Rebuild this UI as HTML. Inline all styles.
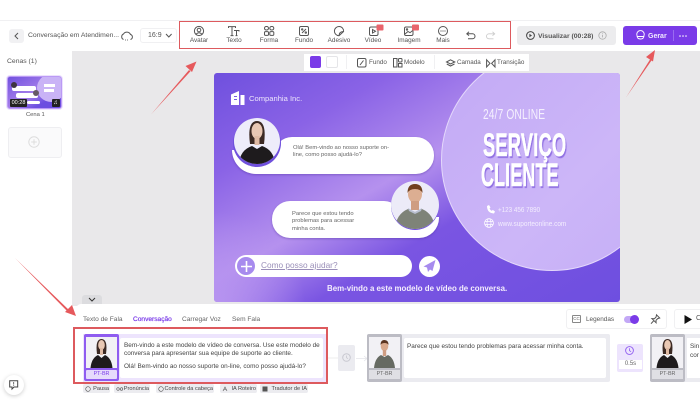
<!DOCTYPE html>
<html><head><meta charset="utf-8">
<style>
html,body{margin:0;padding:0;background:#fff}
#r{position:relative;width:700px;height:400px;overflow:hidden;background:#fff;font-family:"Liberation Sans",sans-serif;color:#444}
.a{position:absolute}
.t{position:absolute;white-space:nowrap}
.lab{position:absolute;top:36.5px;font-size:6.4px;color:#555;text-align:center;width:50px;white-space:nowrap}
svg{position:absolute;overflow:visible}
.ic{fill:none;stroke:#555;stroke-width:1}
.tag{position:absolute;top:384px;height:9px;background:#ececf0;border-radius:2px}
.tag span{position:absolute;right:1px;top:2px;font-size:5.6px;line-height:7px;color:#444;white-space:nowrap}
.tag svg{left:2px;top:1.5px}
.red{position:absolute;background:#dd5a5e}
</style></head><body><div id="r">
<!-- top bar -->
<div class="a" style="left:0;top:20px;width:700px;height:1px;background:#f0f0f2"></div>
<div class="a" style="left:9px;top:29px;width:15px;height:14px;background:#f1f1f3;border-radius:3px"></div>
<svg style="left:0;top:0" width="30" height="50"><path d="M18 33l-3 3 3 3" class="ic"/></svg>
<div class="t" style="left:28px;top:32px;font-size:6.8px;color:#555">Conversação em Atendimen...</div>
<svg style="left:120px;top:30px" width="14" height="12"><path d="M3.5 9.500a3 3 0 0 1 0-5.500 4 4 0 0 1 7 .5 2.600 2.600 0 0 1 0 5" class="ic" stroke-width=".8"/><path d="M5 10h.8M7 10h.8" class="ic" stroke-width=".8"/></svg>
<div class="a" style="left:140px;top:28px;width:37px;height:15px;border:1px solid #f0f0f2;border-radius:3px;box-sizing:border-box"></div>
<div class="t" style="left:148px;top:31.5px;font-size:7px;color:#555">16:9</div>
<svg style="left:165px;top:33px" width="8" height="6"><path d="M1 1l2.800 3 2.800-3" class="ic" stroke-width=".7"/></svg>
<div class="a" style="left:179px;top:21px;width:332px;height:28px;border:1.5px solid #dd5a5e;box-sizing:border-box"></div>
<!-- toolbar icons -->
<svg style="left:194px;top:26px" width="11" height="11"><circle cx="5" cy="5" r="4.600" class="ic"/><circle cx="5" cy="4" r="1.800" class="ic"/><path d="M2 8.200q3-3 6 0" class="ic"/></svg>
<div class="lab" style="left:174px">Avatar</div>
<svg style="left:228px;top:26px" width="12" height="11"><path d="M.5 2V.6h7V2M4 .6v9M2.500 9.600h3M6 4.500h5v1M8.500 4.500v5M7.500 9.600h2" class="ic"/></svg>
<div class="lab" style="left:209px">Texto</div>
<svg style="left:264px;top:26px" width="11" height="11"><rect x=".5" y=".5" width="4" height="3.500" rx="1.700" class="ic"/><rect x="5.800" y=".5" width="4" height="3.500" rx="1.700" class="ic"/><rect x=".5" y="5.600" width="4" height="3.800" rx="1" class="ic"/><rect x="5.800" y="5.600" width="4" height="3.800" rx="1" class="ic"/></svg>
<div class="lab" style="left:244px">Forma</div>
<svg style="left:299px;top:26px" width="11" height="11"><rect x=".5" y=".5" width="9" height="9" rx="1.500" class="ic"/><path d="M3 7l4-4" class="ic"/><circle cx="3.200" cy="3.400" r=".7" class="ic"/><circle cx="6.800" cy="6.600" r=".7" class="ic"/></svg>
<div class="lab" style="left:279px">Fundo</div>
<svg style="left:334px;top:26px" width="11" height="11"><path d="M9.600 5.500A4.600 4.600 0 1 0 5 9.700L9.600 5.500zM5 9.700q0-4 4.600-4.200" class="ic"/></svg>
<div class="lab" style="left:314px">Adesivo</div>
<svg style="left:369px;top:24px" width="16" height="13"><rect x=".5" y="3" width="8.500" height="8.500" rx="1.500" class="ic"/><path d="M3.500 5.500v3.500l3-1.700z" class="ic" stroke-width=".8"/><rect x="7.500" y=".5" width="7" height="6" rx="1" fill="#e8646c"/></svg>
<div class="lab" style="left:348px">Vídeo</div>
<svg style="left:404px;top:24px" width="16" height="13"><rect x=".5" y="3" width="8.500" height="8.500" rx="1.500" class="ic"/><circle cx="3" cy="5.500" r=".7" class="ic"/><path d="M1 10l3-2.500 2 1.200 3-2.500" class="ic" stroke-width=".8"/><rect x="8" y=".5" width="7" height="6" rx="1" fill="#e8646c"/></svg>
<div class="lab" style="left:384px">Imagem</div>
<svg style="left:438px;top:26px" width="11" height="11"><circle cx="5" cy="5" r="4.500" class="ic"/><circle cx="3" cy="5" r=".6" fill="#555"/><circle cx="5" cy="5" r=".6" fill="#555"/><circle cx="7" cy="5" r=".6" fill="#555"/></svg>
<div class="lab" style="left:418px">Mais</div>
<svg style="left:466px;top:31px" width="11" height="9"><path d="M3 .8L.8 2.800 3 4.600M1 2.800h5.500a2.500 2.500 0 0 1 0 5H2" class="ic"/></svg>
<svg style="left:485px;top:31px" width="11" height="9"><path d="M7.500.8l2.200 2L7.500 4.600M9.500 2.800H4a2.500 2.500 0 0 0 0 5h4.500" fill="none" stroke="#ccc" stroke-width=".9"/></svg>
<!-- visualizar -->
<div class="a" style="left:517px;top:26px;width:99px;height:19px;background:#ececee;border-radius:3px"></div>
<svg style="left:526px;top:31px" width="10" height="10"><circle cx="4.500" cy="4.500" r="3.900" class="ic" style="stroke:#444"/><path d="M3.400 2.800v3.400l2.600-1.700z" fill="#444"/></svg>
<div class="t" style="left:538px;top:33px;font-size:6.8px;font-weight:bold;color:#555">Visualizar (00:28)</div>
<svg style="left:598px;top:31px" width="10" height="10"><circle cx="4.500" cy="4.500" r="3.700" fill="none" stroke="#aaa" stroke-width=".8"/><path d="M4.500 4v2.400M4.500 2.400v.8" stroke="#aaa" stroke-width=".8"/></svg>
<!-- gerar -->
<div class="a" style="left:623px;top:26px;width:74px;height:19px;background:#7a3be8;border-radius:3px"></div>
<svg style="left:636px;top:31px" width="10" height="10"><path d="M1 4.500a3.700 3.700 0 1 1 7 0q0 3.500-3.500 3.500T1 4.500zM1.500 5.500h6" fill="none" stroke="#fff" stroke-width=".9"/></svg>
<div class="t" style="left:648px;top:33px;font-size:7px;font-weight:bold;color:#f2eaff">Gerar</div>
<div class="a" style="left:673px;top:30px;width:1px;height:11px;background:#9a6cf0"></div>
<svg style="left:679px;top:35px" width="10" height="2"><circle cx="1" cy="1" r=".8" fill="#fff"/><circle cx="4" cy="1" r=".8" fill="#fff"/><circle cx="7" cy="1" r=".8" fill="#fff"/></svg>

<!-- sidebar -->
<div class="t" style="left:7px;top:57.5px;font-size:6.8px;color:#555">Cenas (1)</div>
<div class="a" style="left:7px;top:76px;width:55px;height:33px;border:1.5px solid #bb9af5;border-radius:3px;box-shadow:0 0 0 1px #ece2fd;box-sizing:border-box;overflow:hidden;background:linear-gradient(150deg,#7152de,#a57eea 50%,#6c4ee0 75%)">
 <div class="a" style="left:29px;top:-3px;width:28px;height:28px;border-radius:50%;background:#c9b3f6"></div>
 <div class="a" style="left:36px;top:7px;width:11px;height:3px;background:#fff"></div>
 <div class="a" style="left:36px;top:12px;width:10px;height:3px;background:#fff"></div>
 <div class="a" style="left:4px;top:9px;width:24px;height:4.5px;background:#fff;border-radius:2px"></div>
 <div class="a" style="left:8px;top:16px;width:22px;height:4.5px;background:#fff;border-radius:2px"></div>
 <div class="a" style="left:2.5px;top:5px;width:6px;height:6px;border-radius:50%;background:#3e3440"></div>
 <div class="a" style="left:25px;top:13px;width:6px;height:6px;border-radius:50%;background:#665a66"></div>
 <div class="a" style="left:2px;top:21.5px;width:17px;height:8px;background:#222;color:#fff;font-size:5.5px;line-height:8px;text-align:center;border-radius:1px">00:28</div>
 <div class="a" style="left:19px;top:23.5px;width:13px;height:3.5px;background:#fff;border-radius:2px"></div>
 <div class="a" style="left:43.5px;top:21.5px;width:8px;height:8px;background:#222;color:#fff;font-size:6px;line-height:8px;text-align:center;border-radius:1px">♫</div>
</div>
<div class="t" style="left:26px;top:111.5px;font-size:5.8px;color:#555">Cena 1</div>
<div class="a" style="left:8px;top:127px;width:54px;height:31px;border:1px solid #eeeef1;border-radius:3px;box-sizing:border-box;background:#fafafb"></div>
<svg style="left:28px;top:136px" width="13" height="13"><circle cx="6" cy="6" r="5.200" fill="none" stroke="#ddd"/><path d="M6 3.200v5.600M3.200 6h5.600" stroke="#ddd"/></svg>

<!-- canvas -->
<div class="a" style="left:72px;top:51px;width:628px;height:255px;background:#e9e8ea"></div>
<div class="a" style="left:304px;top:54px;width:225px;height:17px;background:#fff"></div>
<div class="a" style="left:310px;top:56px;width:11px;height:12px;background:#7a3be8;border-radius:2px"></div>
<div class="a" style="left:326px;top:56px;width:12px;height:12px;background:#fff;border:1px solid #e5e5e8;border-radius:2px;box-sizing:border-box"></div>
<div class="a" style="left:346px;top:55px;width:1px;height:14px;background:#f0f0f2"></div>
<svg style="left:357px;top:57.5px" width="10" height="10"><rect x=".5" y=".5" width="8.500" height="8.500" rx="1.500" class="ic" stroke-width=".8"/><path d="M3 7l3.500-4.500" class="ic" stroke-width=".8"/></svg>
<div class="t" style="left:369px;top:59px;font-size:6.3px;color:#555">Fundo</div>
<svg style="left:393px;top:57.5px" width="10" height="10"><rect x=".5" y=".5" width="3.500" height="8.500" class="ic" stroke-width=".8"/><rect x="5.500" y=".5" width="3.500" height="3.500" rx="1" class="ic" stroke-width=".8"/><rect x="5.500" y="5.500" width="3.500" height="3.500" class="ic" stroke-width=".8"/></svg>
<div class="t" style="left:404px;top:59px;font-size:6.3px;color:#555">Modelo</div>
<div class="a" style="left:434px;top:55px;width:1px;height:14px;background:#f0f0f2"></div>
<svg style="left:446px;top:58.5px" width="10" height="9"><path d="M4.500.8L8.800 3 4.500 5 .5 3zM.8 5l3.700 2L8.500 5" class="ic" stroke-width=".8"/></svg>
<div class="t" style="left:457px;top:59px;font-size:6.3px;color:#555">Camada</div>
<svg style="left:486px;top:58.5px" width="10" height="9"><path d="M.6.8l3.400 3.600L.6 8zM9 .8L5.600 4.400 9 8z" class="ic" stroke-width=".8"/></svg>
<div class="t" style="left:497px;top:59px;font-size:6.3px;color:#555">Transição</div>

<!-- stage -->
<div class="a" style="left:214px;top:73px;width:406px;height:229px;border-radius:3px;overflow:hidden;background:linear-gradient(150deg,#6f50de 0%,#8a63e6 22%,#b591ee 45%,#7a55e2 62%,#6e4fe0 100%)">
 <div class="a" style="left:0;top:0;width:230px;height:229px;background:radial-gradient(circle at 0% 100%,#b794f0 0,rgba(183,148,240,0) 28%)"></div>
 <div class="a" style="left:227px;top:-24px;width:222px;height:222px;border-radius:50%;background:linear-gradient(135deg,#c2a9f5,#ccb6f8 60%,#c5aef6);border:1px solid #e4d8fb;box-sizing:border-box"></div>
 <!-- logo -->
 <svg style="left:17px;top:18px" width="14" height="15"><path d="M0 3.500L8 0v14H0zM9.500 4H13.500v10H9.500z" fill="#fff"/><path d="M3 5.500h3M3 8.500h3" stroke="#7a5ae2" stroke-width="1"/></svg>
 <div class="t" style="left:35px;top:21px;font-size:7.6px;color:#ece4fc">Companhia Inc.</div>
 <!-- bubble 1 -->
 <div class="a" style="left:0;top:0;width:406px;height:229px;filter:drop-shadow(0 1px 1px rgba(70,40,150,.4))">
  <div class="a" style="left:60px;top:64px;width:160px;height:37px;background:#fff;border-radius:18px"></div>
  <div class="a" style="left:18px;top:77px;width:60px;height:24px;background:#fff;border-radius:0 0 0 24px"></div>
 </div>
 <div class="a" style="left:19px;top:46px;width:48px;height:48px;border-radius:50%;background:#6f50dc"></div>
 <div class="a" style="left:20px;top:45px;width:46px;height:46px;border-radius:50%;overflow:hidden;background:#eeedfa">
  <svg style="left:0;top:0" width="46" height="46"><path d="M16 26q-3-23 7-23t7 23z" fill="#3c2a24"/><ellipse cx="23" cy="13" rx="5.500" ry="8" fill="#e9c8b4"/><path d="M20.500 18h5v9h-5z" fill="#e0bba5"/><path d="M5 46q1-14 13-18l5 3 5-3q12 4 13 18z" fill="#1e1b1d"/></svg>
 </div>
 <div class="t" style="left:79px;top:72px;font-size:5.8px;line-height:7.2px;color:#666">Olá! Bem-vindo ao nosso suporte on-<br>line, como posso ajudá-lo?</div>
 <!-- bubble 2 -->
 <div class="a" style="left:0;top:0;width:406px;height:229px;filter:drop-shadow(0 1px 1px rgba(70,40,150,.4))">
  <div class="a" style="left:58px;top:128px;width:130px;height:37px;background:#fff;border-radius:18px"></div>
  <div class="a" style="left:165px;top:144px;width:60px;height:21px;background:#fff;border-radius:0 0 20px 0"></div>
 </div>
 <div class="a" style="left:177px;top:109px;width:48px;height:48px;border-radius:50%;background:#6f50dc"></div>
 <div class="a" style="left:177px;top:108px;width:48px;height:48px;border-radius:50%;overflow:hidden;background:#ecebf8">
  <svg style="left:0;top:0" width="48" height="48"><ellipse cx="24" cy="13" rx="7" ry="9" fill="#dcae92"/><path d="M16.500 12q0-9 7.500-9t7.500 9q-2-4-7.500-4t-7.500 4z" fill="#70401f"/><path d="M20 20h8v9h-8z" fill="#cf9d82"/><path d="M4 48q1-15 13-20l7 3 7-3q12 5 13 20z" fill="#7e8378"/><path d="M17 27l7 4 7-4-1 3-6 3-6-3z" fill="#b9c0d0"/></svg>
 </div>
 <div class="t" style="left:78px;top:137.5px;font-size:5.8px;line-height:7.6px;color:#666">Parece que estou tendo<br>problemas para acessar<br>minha conta.</div>
 <!-- input -->
 <div class="a" style="left:21px;top:182px;width:177px;height:22px;background:#fff;border-radius:11px"></div>
 <div class="a" style="left:23px;top:184px;width:18px;height:18px;border-radius:50%;background:#a78bee"></div>
 <svg style="left:25.5px;top:186.5px" width="13" height="13"><path d="M6.500 1v11M1 6.500h11" stroke="#fff" stroke-width="1.600"/></svg>
 <div class="t" style="left:47px;top:187px;font-size:8.3px;color:#9a8fb8;text-decoration:underline">Como posso ajudar?</div>
 <div class="a" style="left:205px;top:183px;width:21px;height:21px;border-radius:50%;background:#fff"></div>
 <svg style="left:207px;top:186px" width="17" height="15"><path d="M14.500 1L2.500 7.500l3.500 1 1 4.500 2-2.500 2.500 1.500z" fill="#a78bee"/></svg>
 <div class="t" style="left:113px;top:210.5px;font-size:7.9px;font-weight:bold;color:#f4eefd">Bem-vindo a este modelo de vídeo de conversa.</div>
 <!-- right text -->
 <div class="t" style="left:269px;top:33px;font-size:15px;color:#f5f0fe;transform:scaleX(.68);transform-origin:0 0;letter-spacing:.2px">24/7 ONLINE</div>
 <div class="t" style="left:269px;top:54px;font-size:32px;font-weight:bold;color:#fff;transform:scaleX(.57);transform-origin:0 0;text-shadow:2px 2px 1px #8f6fe2;-webkit-text-stroke:.6px #fff;letter-spacing:.4px">SERVIÇO</div>
 <div class="t" style="left:267px;top:84px;font-size:32px;font-weight:bold;color:#fff;transform:scaleX(.556);transform-origin:0 0;text-shadow:2px 2px 1px #8f6fe2;-webkit-text-stroke:.6px #fff;letter-spacing:.4px">CLIENTE</div>
 <svg style="left:272px;top:132px" width="9" height="9"><path d="M1 1l2-1 1.500 2.500-1 1q.8 1.800 2.300 2.400l1-1L9 6.500 8 8.500Q1 8 1 1z" fill="#fff"/></svg>
 <div class="t" style="left:284px;top:132px;font-size:7.4px;color:#f3edfe;transform:scaleX(.85);transform-origin:0 0">+123 456 7890</div>
 <svg style="left:270px;top:145px" width="11" height="11"><circle cx="5" cy="5" r="4.400" fill="none" stroke="#fff" stroke-width=".8"/><ellipse cx="5" cy="5" rx="2" ry="4.400" fill="none" stroke="#fff" stroke-width=".7"/><path d="M.6 3.500h8.800M.6 6.500h8.800" stroke="#fff" stroke-width=".7"/></svg>
 <div class="t" style="left:284px;top:146px;font-size:7.2px;color:#f3edfe;transform:scaleX(.9);transform-origin:0 0">www.suporteonline.com</div>
</div>

<!-- collapse -->
<div class="a" style="left:82px;top:295px;width:20px;height:9px;background:#dcdcdf;border-radius:3px 3px 0 0"></div>
<svg style="left:88px;top:297px" width="9" height="6"><path d="M1 1l3 3 3-3" class="ic" style="stroke:#333"/></svg>

<!-- bottom panel -->
<div class="a" style="left:76px;top:304px;width:624px;height:96px;background:#fff;border-radius:5px 0 0 0"></div>
<div class="t" style="left:83px;top:315.5px;font-size:6.6px;color:#666">Texto de Fala</div>
<div class="t" style="left:133px;top:315.5px;font-size:6.6px;color:#7a3be8;-webkit-text-stroke:.2px #7a3be8">Conversação</div>
<div class="t" style="left:182px;top:315.5px;font-size:6.6px;color:#666">Carregar Voz</div>
<div class="t" style="left:232px;top:315.5px;font-size:6.6px;color:#666">Sem Fala</div>
<div class="a" style="left:566px;top:309px;width:101px;height:20px;border:1px solid #f0f0f2;border-radius:3px;box-sizing:border-box"></div>
<div class="a" style="left:572px;top:315px;width:9px;height:8px;border:1px solid #888;border-radius:1px;box-sizing:border-box;font-size:4.5px;line-height:6px;text-align:center;color:#666">CC</div>
<div class="t" style="left:586px;top:315.5px;font-size:6.4px;color:#555">Legendas</div>
<div class="a" style="left:624px;top:316px;width:14px;height:7px;background:#c3a8f6;border-radius:4px"></div>
<div class="a" style="left:630px;top:315px;width:9px;height:9px;background:#7a3be8;border-radius:50%"></div>
<svg style="left:650px;top:314px" width="11" height="11"><path d="M6.500.8l3.200 3.200-2 .6-1.700 1.700.1 2.500-4.200-4.200 2.500.1 1.700-1.700zM3.500 7L1 9.700" class="ic" stroke-width=".8"/></svg>
<div class="a" style="left:674px;top:309px;width:30px;height:20px;border:1px solid #f0f0f2;border-radius:3px;box-sizing:border-box"></div>
<svg style="left:684px;top:315px" width="9" height="9"><path d="M.5 0v9L8 4.500z" fill="#111"/></svg>
<div class="t" style="left:696px;top:315px;font-size:7px;color:#555">C</div>

<!-- card 1 -->
<div class="a" style="left:83px;top:334px;width:243px;height:48px;background:#ede4fd"></div>
<div class="a" style="left:120px;top:338px;width:203px;height:40px;background:#fff;border-radius:2px"></div>
<div class="a" style="left:84px;top:334px;width:35px;height:47px;background:#8f5cf0;border-radius:2px"></div>
<div class="a" style="left:86px;top:337px;width:31px;height:31px;background:#f2f1f5;overflow:hidden">
 <svg style="left:0;top:0" width="31" height="31"><path d="M11 17q-2-15 4.500-15T20 17z" fill="#3c2a24"/><ellipse cx="15.500" cy="8" rx="3.300" ry="5" fill="#e9c8b4"/><path d="M14 11h3v7h-3z" fill="#e0bba5"/><path d="M4.500 31q1-10 7.500-13l3.500 3 3.500-3q6.500 3 7.500 13z" fill="#1e1b1d"/></svg>
</div>
<div class="a" style="left:86px;top:370px;width:31px;height:9px;background:#e6dafc;border-radius:1px;font-size:5.4px;line-height:9px;text-align:center;color:#7a3be8">PT-BR</div>
<div class="t" style="left:124px;top:341.5px;font-size:6.4px;line-height:8.5px;color:#444">Bem-vindo a este modelo de vídeo de conversa. Use este modelo de<br>conversa para apresentar sua equipe de suporte ao cliente.</div>
<div class="t" style="left:124px;top:363px;font-size:6.4px;color:#444">Olá! Bem-vindo ao nosso suporte on-line, como posso ajudá-lo?</div>
<!-- red frame around card 1 -->
<div class="red" style="left:73px;top:327px;width:255px;height:2px"></div>
<div class="red" style="left:73px;top:382px;width:255px;height:2px"></div>
<div class="red" style="left:73px;top:327px;width:2px;height:57px"></div>
<div class="red" style="left:326px;top:327px;width:2px;height:57px"></div>
<!-- connector -->
<div class="a" style="left:338px;top:345px;width:17px;height:26px;background:#ebebf0;border-radius:2px"></div>
<svg style="left:342px;top:353px" width="10" height="10"><circle cx="4.500" cy="4.500" r="3.800" fill="none" stroke="#c8c8d0"/><path d="M4.500 2.500v2.200l1.500 1" fill="none" stroke="#c8c8d0" stroke-width=".8"/></svg>
<svg style="left:328px;top:355px" width="40" height="8"><path d="M0 3h10" stroke="#eee"/><path d="M28 3.500h11M36 1l3 2.500L36 6" fill="none" stroke="#e5e5ea" stroke-width=".8"/></svg>
<!-- card 2 -->
<div class="a" style="left:367px;top:334px;width:243px;height:48px;background:#ebebf0;border-radius:2px"></div>
<div class="a" style="left:367px;top:334px;width:35px;height:48px;background:#bcbcc4;border-radius:2px"></div>
<div class="a" style="left:369px;top:337px;width:31px;height:31px;background:#f2f1f5;overflow:hidden">
 <svg style="left:0;top:0" width="31" height="31"><ellipse cx="15.500" cy="9" rx="3.800" ry="5.200" fill="#d9a98c"/><path d="M11.500 8q0-5 4-5t4 5q-1-2-4-2t-4 2z" fill="#5b3520"/><path d="M13.800 13h3.400v6h-3.400z" fill="#cf9d82"/><path d="M5 31q1-10 7-13l3.500 2 3.500-2q6 3 7 13z" fill="#666a62"/></svg>
</div>
<div class="a" style="left:369px;top:370px;width:31px;height:9px;background:#dfdfe4;font-size:5.4px;line-height:9px;text-align:center;color:#666">PT-BR</div>
<div class="a" style="left:404px;top:338px;width:202px;height:40px;background:#fff;border-radius:2px"></div>
<div class="t" style="left:407px;top:342.5px;font-size:6.4px;color:#444">Parece que estou tendo problemas para acessar minha conta.</div>
<!-- 0.5s -->
<div class="a" style="left:617px;top:344px;width:26px;height:28px;background:#ede4fd;border-radius:2px"></div>
<svg style="left:625px;top:346px" width="10" height="10"><circle cx="4.500" cy="4.500" r="3.900" fill="none" stroke="#8f5cf0" stroke-width=".9"/><path d="M4.500 2.300v2.400l1.600 1" fill="none" stroke="#8f5cf0" stroke-width=".8"/></svg>
<div class="a" style="left:619px;top:360px;width:23px;height:9px;background:#fff;font-size:6px;line-height:9px;text-align:center;color:#666">0.5s</div>
<!-- card 3 -->
<div class="a" style="left:650px;top:334px;width:50px;height:48px;background:#ebebf0;border-radius:2px 0 0 2px"></div>
<div class="a" style="left:650px;top:334px;width:35px;height:48px;background:#bcbcc4;border-radius:2px"></div>
<div class="a" style="left:652px;top:337px;width:31px;height:31px;background:#f2f1f5;overflow:hidden">
 <svg style="left:0;top:0" width="31" height="31"><path d="M11 17q-2-15 4.500-15T20 17z" fill="#3c2a24"/><ellipse cx="15.500" cy="8" rx="3.300" ry="5" fill="#e9c8b4"/><path d="M14 11h3v7h-3z" fill="#e0bba5"/><path d="M4.500 31q1-10 7.500-13l3.500 3 3.500-3q6.500 3 7.500 13z" fill="#1e1b1d"/></svg>
</div>
<div class="a" style="left:652px;top:370px;width:31px;height:9px;background:#dfdfe4;font-size:5.4px;line-height:9px;text-align:center;color:#666">PT-BR</div>
<div class="a" style="left:687px;top:338px;width:13px;height:40px;background:#fff"></div>
<div class="t" style="left:690px;top:342px;font-size:6.4px;line-height:9px;color:#444">Sin<br>cor</div>
<!-- tags -->
<div class="tag" style="left:83px;width:27px"><svg width="6" height="6"><circle cx="3" cy="3" r="2.300" fill="none" stroke="#555" stroke-width=".6"/></svg><span>Pausa</span></div>
<div class="tag" style="left:114px;width:36px"><svg width="7" height="6"><circle cx="2" cy="3" r="1.300" fill="none" stroke="#555" stroke-width=".6"/><circle cx="5.500" cy="3" r="1.300" fill="none" stroke="#555" stroke-width=".6"/></svg><span>Pronúncia</span></div>
<div class="tag" style="left:156px;width:58px"><svg width="6" height="6"><circle cx="3" cy="3" r="2.300" fill="none" stroke="#555" stroke-width=".6"/></svg><span>Controle da cabeça</span></div>
<div class="tag" style="left:220px;width:37px"><svg width="6" height="6"><path d="M1 5L3 1l2 4M1.500 3.500h3" fill="none" stroke="#555" stroke-width=".6"/></svg><span>IA Roteiro</span></div>
<div class="tag" style="left:260px;width:48px"><svg width="6" height="6"><rect x=".5" y=".5" width="5" height="5" fill="#555"/></svg><span>Tradutor de IA</span></div>
<!-- feedback -->
<div class="a" style="left:4px;top:375px;width:20px;height:20px;background:#fff;border-radius:50%;box-shadow:0 1px 4px rgba(0,0,0,.2)"></div>
<svg style="left:9px;top:380px" width="10" height="10"><path d="M.7.7h8v6.300H5L3 9V7H.7z" fill="none" stroke="#444"/><path d="M4.700 2v2.500M4.700 5.200v.8" stroke="#444" stroke-width=".8"/></svg>

<!-- red arrows -->
<svg style="left:0;top:0" width="700" height="400">
 <path d="M151 114.500L189 70l1.500 1.200z" fill="#e6595c"/><path d="M196.500 61.500l-11 4.500 6.500 6z" fill="#e6595c"/>
 <path d="M626 97.500L651 58l1.500 1z" fill="#e6595c"/><path d="M655 50l-9 7 7 4.500z" fill="#e6595c"/>
 <path d="M15 258L70 311l-1.500 1.500z" fill="#e6595c"/><path d="M76 316l-4-11-7 7z" fill="#e6595c"/>
</svg>
</div></body></html>
